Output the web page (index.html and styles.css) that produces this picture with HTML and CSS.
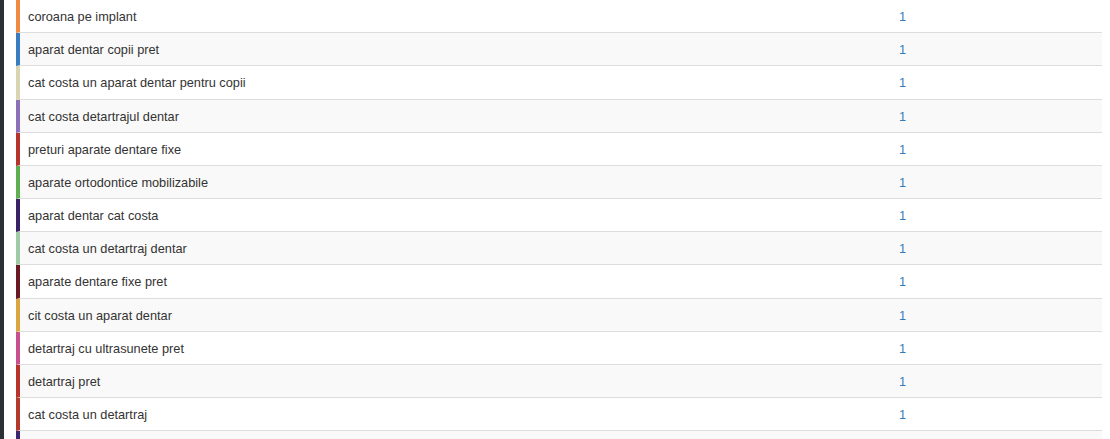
FILE: index.html
```html
<!DOCTYPE html>
<html>
<head>
<meta charset="utf-8">
<link rel="stylesheet" href="styles.css">
</head>
<body>
<div class="page">
  <div class="sidebar-edge"></div>
  <div class="content">
    <table class="kw-table">
      <colgroup><col class="col-kw"><col class="col-num"></colgroup>
      <tbody>
        <tr><td class="kw" style="border-left-color:#ee8a42">coroana pe implant</td><td class="num">1</td></tr>
        <tr><td class="kw" style="border-left-color:#3a7cc0">aparat dentar copii pret</td><td class="num">1</td></tr>
        <tr><td class="kw" style="border-left-color:#d8d5b0">cat costa un aparat dentar pentru copii</td><td class="num">1</td></tr>
        <tr><td class="kw" style="border-left-color:#8c70b8">cat costa detartrajul dentar</td><td class="num">1</td></tr>
        <tr><td class="kw" style="border-left-color:#b5342c">preturi aparate dentare fixe</td><td class="num">1</td></tr>
        <tr><td class="kw" style="border-left-color:#5fae4f">aparate ortodontice mobilizabile</td><td class="num">1</td></tr>
        <tr><td class="kw" style="border-left-color:#3a2266">aparat dentar cat costa</td><td class="num">1</td></tr>
        <tr><td class="kw" style="border-left-color:#a0c9a5">cat costa un detartraj dentar</td><td class="num">1</td></tr>
        <tr><td class="kw" style="border-left-color:#6b1a24">aparate dentare fixe pret</td><td class="num">1</td></tr>
        <tr><td class="kw" style="border-left-color:#dba640">cit costa un aparat dentar</td><td class="num">1</td></tr>
        <tr><td class="kw" style="border-left-color:#c9508e">detartraj cu ultrasunete pret</td><td class="num">1</td></tr>
        <tr><td class="kw" style="border-left-color:#b8332a">detartraj pret</td><td class="num">1</td></tr>
        <tr><td class="kw" style="border-left-color:#b33a2b">cat costa un detartraj</td><td class="num">1</td></tr>
        <tr><td class="kw" style="border-left-color:#3a2770">&nbsp;</td><td class="num">&nbsp;</td></tr>
      </tbody>
    </table>
  </div>
</div>
</body>
</html>
```

FILE: styles.css
```css
html, body {
  margin: 0;
  padding: 0;
  background: #ffffff;
  height: 100%;
  overflow: hidden;
}

.page {
  display: flex;
  height: 439px;
  overflow: hidden;
  font-family: "Liberation Sans", Arial, sans-serif;
  font-size: 12.75px;
  color: #333333;
}

.sidebar-edge {
  width: 4px;
  flex: 0 0 4px;
  background: #2c3136;
}

.content {
  padding-left: 12px;
  width: 1086px;
}

.kw-table {
  width: 1086px;
  border-collapse: separate;
  border-spacing: 0;
  table-layout: fixed;
}

.col-kw { width: 875px; }
.col-num { width: 211px; }

.kw-table td {
  padding: 9px 8px 7px;
  line-height: 16.17px;
  border-bottom: 1px solid #dddddd;
  white-space: nowrap;
  vertical-align: top;
}

.kw-table tr:nth-child(even) td {
  background: #f9f9f9;
}

.kw-table td.kw {
  border-left: 4px solid transparent;
}

.kw-table td.num {
  color: #337ab7;
}
```
